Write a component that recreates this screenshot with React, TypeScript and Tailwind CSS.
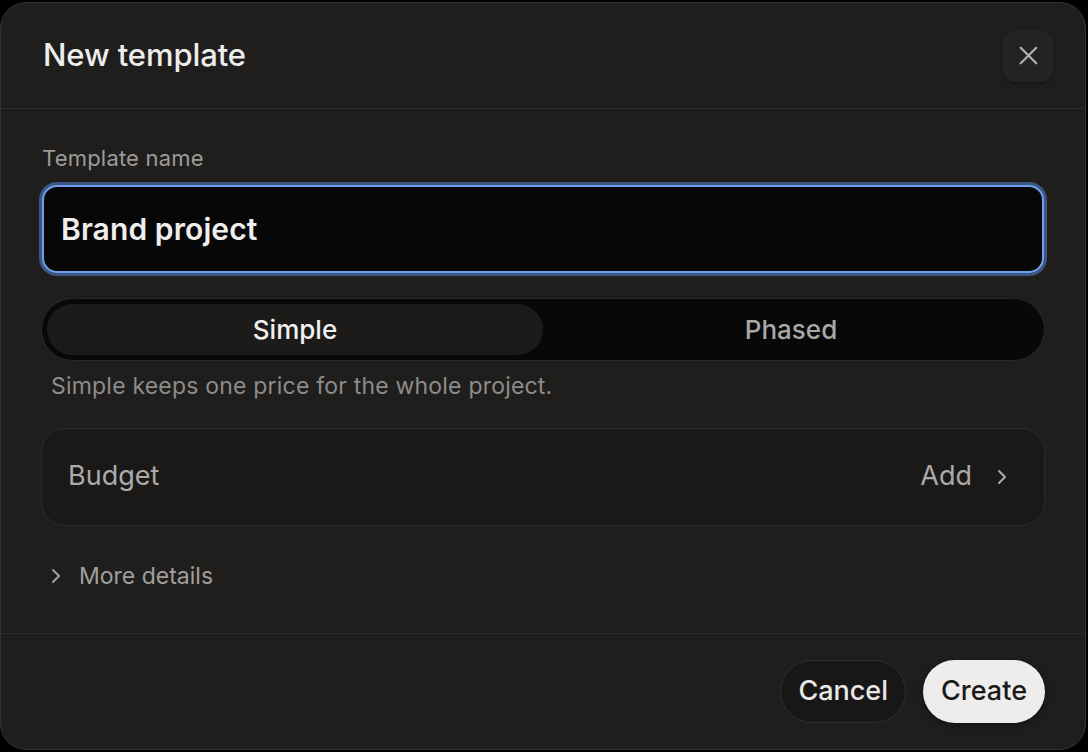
import { X, ChevronRight } from 'lucide-react';

export default function App() {
  return (
    <div
      className="w-[1088px] h-[752px] bg-black pt-[2px] pr-[2px] pb-[2px]"
      style={{ fontFamily: 'Inter, "Noto Sans", sans-serif' }}
    >
      <div className="h-full flex flex-col bg-[#1f1e1d] border border-[#333231] rounded-[26px] overflow-hidden">
        {/* header */}
        <div className="h-[106px] shrink-0 flex items-center justify-between pl-[42px] pr-[31px] border-b border-[#2e2d2c]">
          <h1 className="text-[31px] font-medium text-[#ededeb] tracking-[-0.1px]">New template</h1>
          <button className="w-[52px] h-[52px] flex items-center justify-center rounded-[14px] bg-[#242322] shadow-[0_1px_3px_rgba(0,0,0,0.35)] text-[#b3b2b0]">
            <X className="w-[31px] h-[31px]" strokeWidth={1.7} />
          </button>
        </div>

        {/* body */}
        <div className="flex-1 flex flex-col px-[41px] pt-[38px]">
          <label className="text-[22px] text-[#9c9b99] leading-none tracking-[0.2px]">Template name</label>
          <div className="mt-[13px] -mx-[3px] p-[3px] rounded-[18px] bg-[#3d5585]">
            <div className="h-[88px] flex items-center px-[17px] rounded-[15px] bg-[#070707] border-2 border-[#6ea0ee]">
              <span className="text-[30px] font-semibold text-[#efeeec] tracking-[0.1px]">Brand project</span>
            </div>
          </div>

          <div className="mt-[22px] -mx-[1px] h-[63px] flex items-center p-[5px] rounded-full bg-[#080808] border border-[#2a2928]">
            <div className="flex-1 h-full flex items-center justify-center rounded-full bg-[#1c1b1a] text-[26px] font-medium text-[#f2f1ef]">
              Simple
            </div>
            <div className="flex-1 h-full flex items-center justify-center text-[26px] font-medium text-[#a9a8a6]">
              Phased
            </div>
          </div>

          <p className="mt-[8px] ml-[9px] text-[23px] text-[#8d8c8a] tracking-[0.2px]">
            Simple keeps one price for the whole project.
          </p>

          <div className="mt-[24px] -mx-[1px] h-[98px] flex items-center justify-between pl-[26px] pr-[30px] rounded-[24px] bg-[#1a1918] border border-[#2d2c2b]">
            <span className="text-[27px] text-[#acaba9]">Budget</span>
            <div className="flex items-center gap-[18px] text-[#acaba9]">
              <span className="text-[27px]">Add</span>
              <ChevronRight className="w-[24px] h-[24px]" strokeWidth={2} />
            </div>
          </div>

          <div className="mt-[33px] ml-[2px] flex items-center gap-[11px] text-[#a09f9d]">
            <ChevronRight className="w-[24px] h-[24px]" strokeWidth={2} />
            <span className="text-[23px]">More details</span>
          </div>
        </div>

        {/* footer */}
        <div className="h-[116px] shrink-0 flex items-center justify-end gap-[17px] pr-[40px] border-t border-[#2e2d2c]">
          <button className="h-[63px] px-[17px] rounded-full bg-[#181716] border border-[#2f2e2d] text-[27px] font-medium text-[#e9e8e6]">
            Cancel
          </button>
          <button className="h-[63px] px-[18px] rounded-full bg-[#eeedeb] text-[27px] font-medium text-[#1b1a19] shadow-[0_2px_6px_rgba(0,0,0,0.4)]">
            Create
          </button>
        </div>
      </div>
    </div>
  );
}
